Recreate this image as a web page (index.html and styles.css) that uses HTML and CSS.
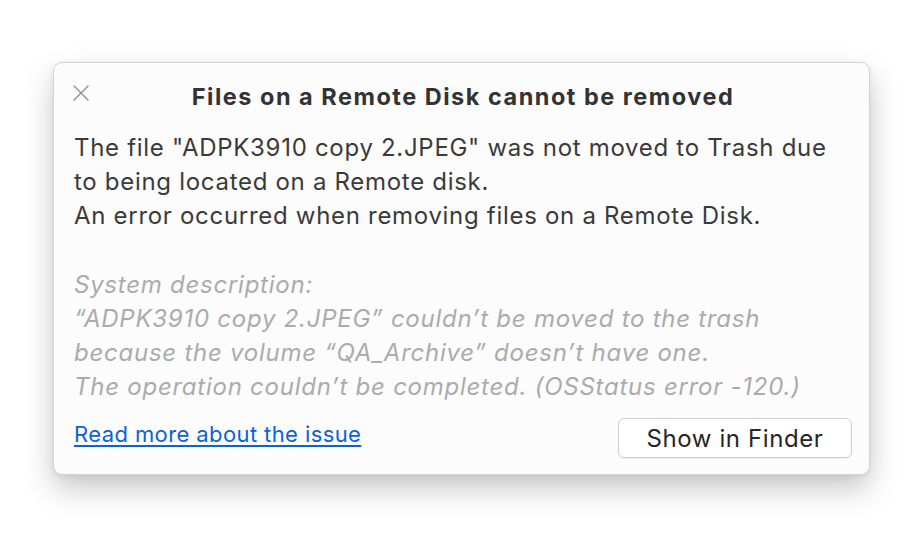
FILE: index.html
```html
<!DOCTYPE html>
<html>
<head>
<meta charset="utf-8">
<link rel="stylesheet" href="styles.css">
</head>
<body>
<div class="stage">
  <div class="dialog">
    <div class="header">
      <button class="close" aria-label="Close">
        <svg width="18" height="18" viewBox="0 0 18 18"><path d="M2 2 L16 16 M16 2 L2 16" stroke="#8a8ca3" stroke-width="1.4" stroke-linecap="round"/></svg>
      </button>
      <h1 class="title">Files on a Remote Disk cannot be removed</h1>
    </div>
    <p class="message">The file "ADPK3910 copy 2.JPEG" was not moved to Trash due to being located on a Remote disk.<br>An error occurred when removing files on a Remote Disk.</p>
    <p class="system">System description:<br>“ADPK3910 copy 2.JPEG” couldn’t be moved to the trash because the volume “QA_Archive” doesn’t have one.<br>The operation couldn’t be completed. (OSStatus error -120.)</p>
    <div class="footer">
      <a class="link" href="#">Read more about the issue</a>
      <button class="btn">Show in Finder</button>
    </div>
  </div>
</div>
</body>
</html>
```
FILE: styles.css
```css
html, body {
  margin: 0;
  padding: 0;
  background: #ffffff;
}
body {
  font-family: "Inter", "Liberation Sans", sans-serif;
  width: 922px;
  height: 538px;
  overflow: hidden;
}
.stage {
  padding: 62px 0 0 53px;
}
.dialog {
  box-sizing: border-box;
  width: 817px;
  height: 413px;
  background: #fcfcfc;
  border: 1px solid #d4d4d4;
  border-radius: 9px;
  box-shadow: 0 14px 30px rgba(0, 0, 0, 0.22), 0 2px 6px rgba(0,0,0,0.06);
  padding: 0 17px 0 20px;
}
.header {
  position: relative;
  height: 66px;
  padding-bottom: 4px;
  display: flex;
  align-items: center;
  justify-content: center;
}
.close {
  position: absolute;
  left: -2px;
  top: 21px;
  background: none;
  border: 0;
  padding: 0;
  width: 18px;
  height: 18px;
  display: flex;
}
.title {
  margin: 0;
  font-size: 23.5px;
  font-weight: 700;
  color: #333333;
  letter-spacing: 1.5px;
}
.message {
  margin: -2px 0 0;
  max-width: 765px;
  font-size: 24px;
  line-height: 34px;
  color: #3a3a3a;
  letter-spacing: 0.7px;
}
.system {
  margin: 35px 0 0;
  font-size: 24px;
  line-height: 34px;
  color: #ababab;
  font-style: italic;
  letter-spacing: 0.75px;
}
.footer {
  display: flex;
  justify-content: space-between;
  align-items: center;
  margin-top: 14px;
}
.link {
  color: #0a63d6;
  font-size: 22px;
  letter-spacing: 0.4px;
  text-decoration: underline;
  text-underline-offset: 3px;
  margin-top: -8px;
}
.btn {
  font-family: inherit;
  width: 234px;
  height: 40px;
  background: #ffffff;
  border: 1px solid #cfcfcf;
  border-radius: 6px;
  font-size: 24px;
  letter-spacing: 0.6px;
  color: #262626;
  box-shadow: 0 1px 1px rgba(0,0,0,0.05);
}
```
